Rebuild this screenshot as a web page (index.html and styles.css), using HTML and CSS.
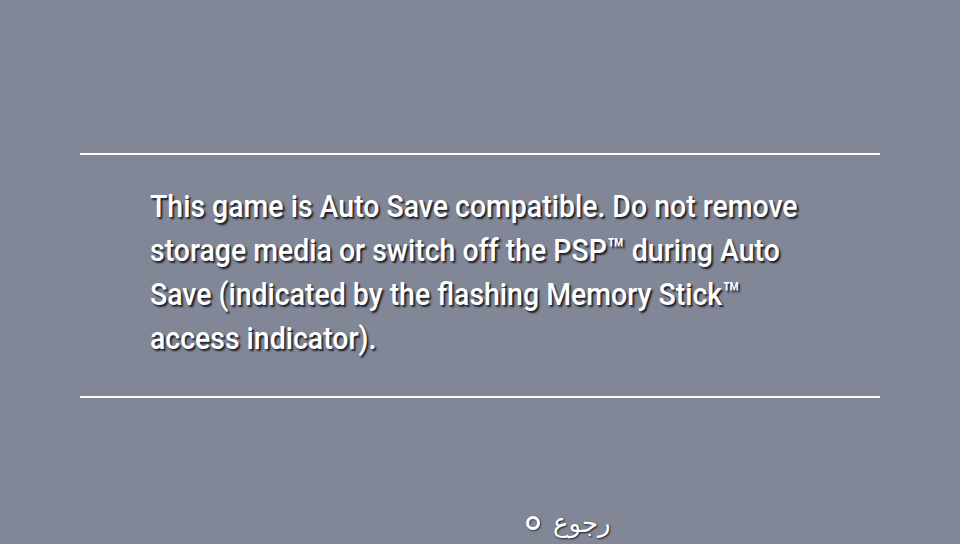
FILE: index.html
```html
<!DOCTYPE html>
<html>
<head>
<meta charset="utf-8">
<link rel="stylesheet" href="styles.css">
</head>
<body>
<div class="screen">
  <div class="panel">
    <p class="message">This game is Auto Save compatible. Do not remove<br>storage media or switch off the PSP™ during Auto<br>Save (indicated by the flashing Memory Stick™<br>access indicator).</p>
  </div>
  <div class="footer">
    <span class="circle"></span>
    <span class="label" lang="ar">رجوع</span>
  </div>
</div>
</body>
</html>
```
FILE: styles.css
```css
html, body {
  margin: 0;
  padding: 0;
}
body {
  background: #818797;
  width: 960px;
  height: 544px;
  overflow: hidden;
}
.screen {
  width: 960px;
  height: 544px;
  display: flex;
  flex-direction: column;
  align-items: center;
  padding-top: 153px;
  box-sizing: border-box;
}
.panel {
  width: 800px;
  height: 245px;
  box-sizing: border-box;
  border-top: 2px solid #ffffff;
  border-bottom: 2px solid #ffffff;
  padding: 29px 0 0 70px;
}
.message {
  margin: 0;
  font-family: Roboto, "Noto Sans", sans-serif;
  font-weight: 500;
  font-size: 32px;
  line-height: 44px;
  color: #ffffff;
  white-space: nowrap;
  transform: scaleX(0.889);
  transform-origin: left top;
  text-shadow: 2px 2px 2px rgba(15, 17, 25, 0.9);
}
.footer {
  align-self: flex-start;
  margin-top: 110px;
  display: flex;
  align-items: center;
  gap: 13px;
  padding-left: 526px;
}
.circle {
  width: 8px;
  height: 8px;
  border: 3px solid #ffffff;
  border-radius: 50%;
  box-shadow: 1px 1px 2px rgba(15, 17, 25, 0.7), inset 1px 1px 2px rgba(15, 17, 25, 0.5);
}
.label {
  font-family: "DejaVu Sans", sans-serif;
  font-size: 26px;
  line-height: 30px;
  color: #ffffff;
  text-shadow: 1px 1px 2px rgba(15, 17, 25, 0.9);
}
```
